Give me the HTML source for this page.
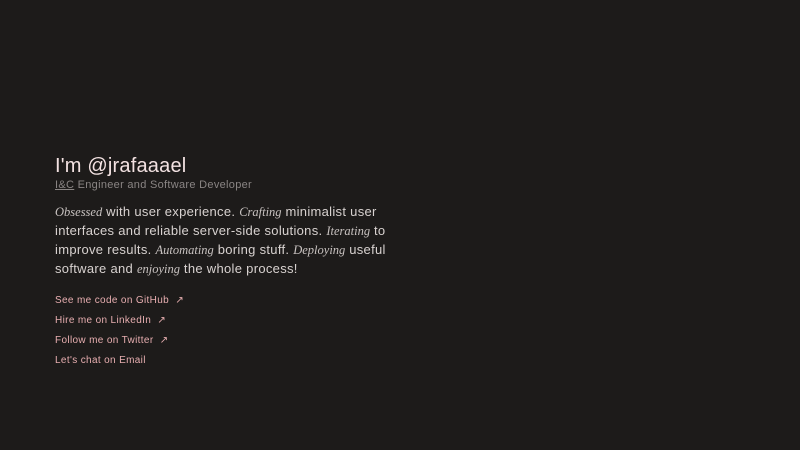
<!DOCTYPE html>
<html><head><meta charset="utf-8"><style>
html,body{margin:0;background:#1d1b1a;width:800px;height:450px;overflow:hidden}
body{font-family:"Liberation Sans",sans-serif;position:relative}
h1{position:absolute;left:55px;top:155px;margin:0;font-size:20px;font-weight:normal;color:#f3e2e2;letter-spacing:0.2px}
.sub{position:absolute;left:55px;top:179px;font-size:11px;color:#8a8584;letter-spacing:0.3px}
.sub u{text-decoration:underline}
.p{position:absolute;left:55px;top:202px;width:360px;font-size:13px;line-height:19px;color:#d8d2d0;letter-spacing:0.3px}
.p i{font-family:"Liberation Serif",serif;color:#c8c2c0;font-size:12.5px;letter-spacing:0;line-height:0}
.links{position:absolute;left:55px;top:295px;font-size:10px;color:#e7aeb0;letter-spacing:0.35px}
.links div{height:20px;line-height:12px}
</style></head><body>
<h1>I'm @jrafaaael</h1>
<div class="sub"><u>I&amp;C</u> Engineer and Software Developer</div>
<div class="p"><i>Obsessed</i> with user experience. <i>Crafting</i> minimalist user interfaces and reliable server-side solutions. <i>Iterating</i> to improve results. <i>Automating</i> boring stuff. <i>Deploying</i> useful software and <i>enjoying</i> the whole process!</div>
<div class="links">
<div>See me code on GitHub &nbsp;↗</div>
<div>Hire me on LinkedIn &nbsp;↗</div>
<div>Follow me on Twitter &nbsp;↗</div>
<div>Let's chat on Email</div>
</div>
</body></html>
